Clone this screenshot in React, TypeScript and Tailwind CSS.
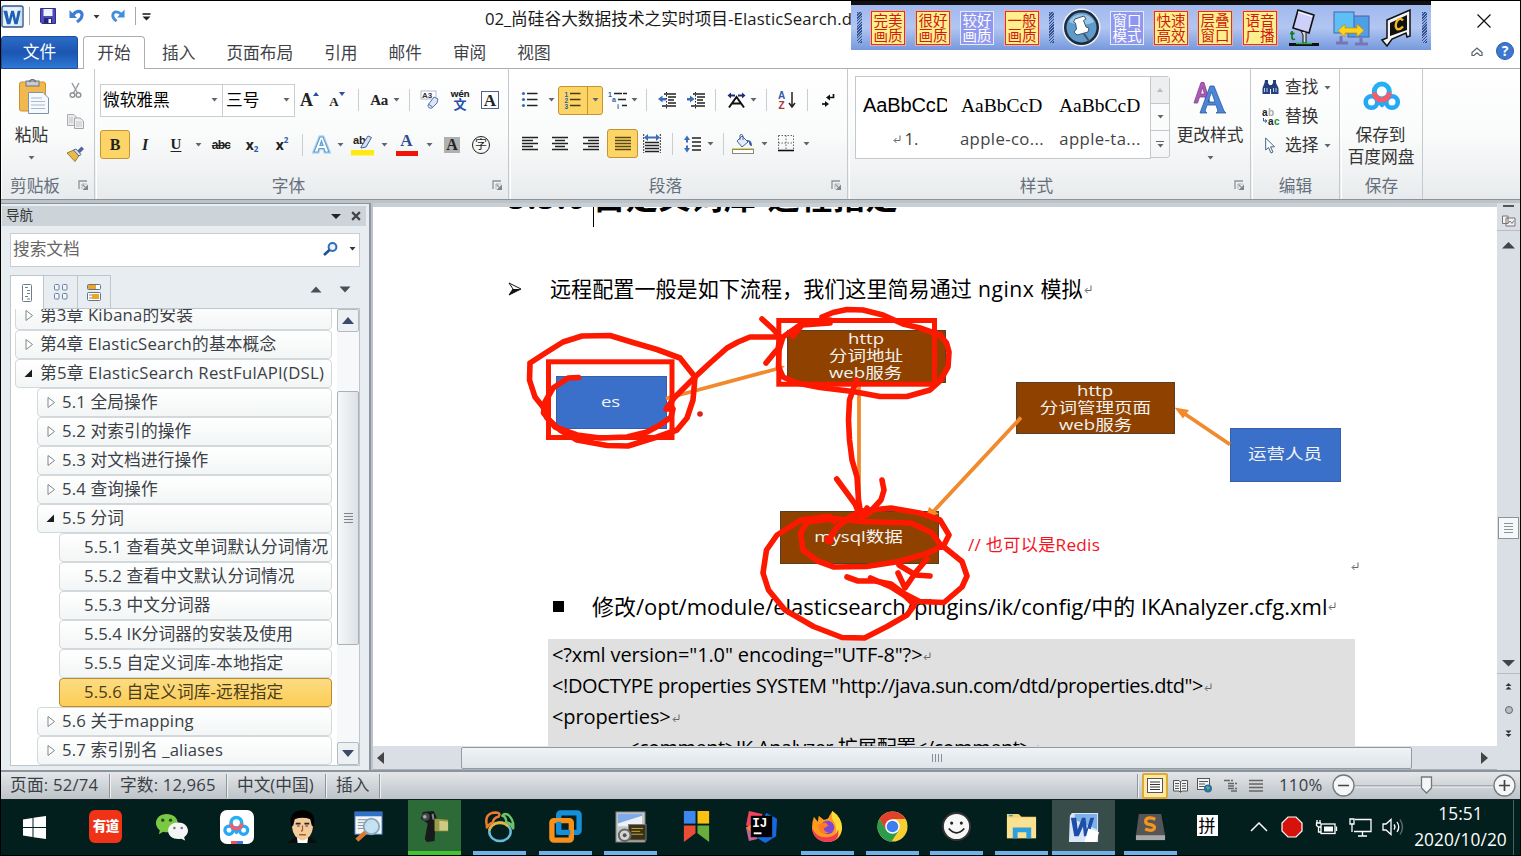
import React from "react";

type Kids = { children?: React.ReactNode };

/* ---------- small shared parts ---------- */

function Slot({ className = "", children }: Kids & { className?: string }) {
  return <div className={"flex h-[30px] shrink-0 items-center justify-center " + className}>{children}</div>;
}

function Caret({ dark = false }: { dark?: boolean }) {
  return (
    <svg className="h-[4px] w-[7px] shrink-0" viewBox="0 0 7 4">
      <path d="M0.5 0H6.5L3.5 3.6Z" fill={dark ? "#333" : "#5d6670"} />
    </svg>
  );
}

function Sep() {
  return <div className="h-[22px] w-px bg-[#c9ced3]" />;
}

function Launcher() {
  return (
    <svg className="h-[11px] w-[11px]" viewBox="0 0 11 11">
      <path d="M1 9V1H9" fill="none" stroke="#8a9299" strokeWidth="1.3" />
      <path d="M4 4L7 7" stroke="#8a9299" strokeWidth="1.2" />
      <path d="M10 4.5V10H4.5Z" fill="#7d858d" />
      <path d="M4 9V4H9" fill="none" stroke="#b3b9be" />
    </svg>
  );
}

function Group({ className, label, launcher, children }: Kids & { className: string; label: string; launcher?: boolean }) {
  return (
    <section className={"relative flex shrink-0 flex-col border-r border-[#c3c9ce] shadow-[inset_1px_0_0_#fff] " + className}>
      <div className="h-[104px]">{children}</div>
      <div className="flex h-[26px] items-center justify-center pt-px text-[16.7px] leading-none text-[#66707c]">{label}</div>
      {launcher && (
        <div className="absolute bottom-[8px] right-[5px]">
          <Launcher />
        </div>
      )}
    </section>
  );
}

function Lines({ rows, color = "#222" }: { rows: [number, number, number][]; color?: string }) {
  return (
    <svg className="h-[18px] w-[18px]" viewBox="0 0 18 18">
      {rows.map(([x1, x2, y], i) => (
        <path key={i} d={`M${x1} ${y}H${x2}`} stroke={color} strokeWidth="1.5" />
      ))}
    </svg>
  );
}

function BaiduDisk({ className }: { className: string }) {
  return (
    <svg className={className} viewBox="0 0 38 30">
      <circle cx="8.5" cy="21" r="5.8" fill="none" stroke="#25a8f5" strokeWidth="4.6" />
      <circle cx="29" cy="21" r="5.8" fill="none" stroke="#25a8f5" strokeWidth="4.6" />
      <path d="M12 16L20 25M26 16L18 25" stroke="#25a8f5" strokeWidth="4.4" />
      <circle cx="18.8" cy="10.5" r="7.5" fill="#fff" stroke="#25b0f0" strokeWidth="5" />
      <path d="M11.3 11.5A7.5 7.5 0 0 0 26.3 11.5" fill="none" stroke="#fb5a67" strokeWidth="5" />
    </svg>
  );
}

function WordLogo({ className }: { className: string }) {
  return (
    <svg className={className} viewBox="0 0 24 24">
      <rect x="1" y="1" width="22" height="22" rx="2" fill="#cfe1f3" stroke="#35598a" strokeWidth="1.4" />
      <rect x="2.5" y="2.5" width="17" height="19" fill="#e9f3fb" />
      <path d="M2.5 6H6.5L8.3 15L10.6 6H13.5L15.6 15L17.4 6H20.5L17.4 20H14L12 11.5L9.7 20H6.2Z" fill="#1f62b4" />
    </svg>
  );
}

/* ---------- title bar and tabs ---------- */

function TitleBar() {
  return (
    <header className="flex h-[35px] shrink-0 items-center bg-white">
      <WordLogo className="mb-[5px] h-[23px] w-[23px]" />
      <div className="mb-[5px] ml-[5px] h-[18px] w-px bg-[#a4a8ac]" />
      <svg className="mb-[5px] ml-[10px] h-[16px] w-[16px]" viewBox="0 0 16 16">
        <path d="M0.5 0.5H15.5V15.5H2L0.5 14Z" fill="#4a4cc0" stroke="#2f2f8c" />
        <rect x="3.5" y="1" width="9" height="7" fill="#eef2ff" />
        <rect x="4" y="10" width="8" height="5.5" fill="#26266e" />
        <rect x="8.5" y="11" width="2.5" height="4" fill="#fff" />
      </svg>
      <svg className="mb-[5px] ml-[13px] h-[16px] w-[16px]" viewBox="0 0 16 16">
        <path d="M4 7C7 2.5 12 2 13 6C13.5 9.5 11 12 8 14" fill="none" stroke="#3f7fd3" strokeWidth="3.2" />
        <path d="M0.5 2V10H8Z" fill="#3f7fd3" />
      </svg>
      <div className="mb-[4px] ml-[8px]"><Caret dark /></div>
      <svg className="mb-[5px] ml-[10px] h-[16px] w-[15px]" viewBox="0 0 16 16">
        <path d="M12 6C8 2.5 4 3 3 6.5C2.5 10 5 12 7 13.5" fill="none" stroke="#3f8fdc" strokeWidth="3" />
        <path d="M15.5 1V9.5H7.5Z" fill="#3f8fdc" />
      </svg>
      <div className="mb-[5px] ml-[10px] h-[18px] w-px bg-[#a4a8ac]" />
      <svg className="mb-[4px] ml-[6px] h-[8px] w-[9px]" viewBox="0 0 9 8">
        <path d="M0.5 1H8.5" stroke="#222" strokeWidth="1.6" />
        <path d="M0.5 3.5H8.5L4.5 7.5Z" fill="#222" />
      </svg>
      <div className="ml-[334px] w-[400px] whitespace-nowrap text-[16.7px] leading-[22px] text-[#1a1a1a]">
        <span className="tracking-[-0.1px]">02_</span>尚硅谷大数据技术之实时项目<span className="tracking-[0.15px]">-ElasticSearch.docx</span>
      </div>
      <svg className="ml-auto mr-[29px] mt-[4px] h-[14px] w-[14px]" viewBox="0 0 14 14">
        <path d="M0.5 0.5L13.5 13.5M13.5 0.5L0.5 13.5" stroke="#111" strokeWidth="1.2" />
      </svg>
    </header>
  );
}

function RibbonTabs() {
  return (
    <nav className="flex h-[33px] shrink-0 items-stretch border-b border-[#a9afb5] bg-white text-[16.7px] leading-none text-[#3e4247]">
      <div className="mb-[-1px] flex w-[77px] items-center justify-center rounded-t-[3px] border border-[#1a4f9f] bg-linear-to-b from-[#2c6cc6] via-[#1c55b2] to-[#2f78d6] text-white">文件</div>
      <div className="mb-[-1px] ml-[5px] flex w-[62px] items-center justify-center rounded-t-[4px] border border-b-0 border-[#a9afb5] bg-white">开始</div>
      {[
        ["插入", "ml-[17px]"],
        ["页面布局", "ml-[31px]"],
        ["引用", "ml-[31px]"],
        ["邮件", "ml-[31px]"],
        ["审阅", "ml-[31px]"],
        ["视图", "ml-[31px]"],
      ].map(([t, m]) => (
        <div key={t} className={"flex items-center whitespace-nowrap pt-[2px] " + m}>{t}</div>
      ))}
      <div className="ml-auto flex items-center gap-[13px] pr-[6px]">
        <svg className="h-[10px] w-[12px]" viewBox="0 0 12 10">
          <path d="M1 8.5V5.5L6 1L11 5.5V8.5H9L6 5.8L3 8.5Z" fill="#fff" stroke="#59626b" strokeWidth="1.2" />
        </svg>
        <div className="mb-[3px] flex h-[18px] w-[18px] items-center justify-center rounded-full border border-[#2d5fae] bg-[#3c78cf] text-[14px] font-bold leading-none text-white">?</div>
      </div>
    </nav>
  );
}

function QualityButton({ a, b, on, className }: { a: string; b: string; on?: boolean; className: string }) {
  return (
    <div
      className={
        "flex h-[34px] w-[34px] shrink-0 flex-col items-center justify-center border pb-px text-[14.5px] leading-[15.5px] " +
        (on ? "border-[#e6e8ff] bg-[#8f98ee] text-white " : "border-[#c8383c] bg-[#fdf08c] text-[#cf1a12] outline outline-[#f2a9a4] ") +
        className
      }
    >
      <span>{a}</span>
      <span>{b}</span>
    </div>
  );
}

function Grip({ className }: { className: string }) {
  return <div className={"h-[31px] w-[5px] shrink-0 bg-[repeating-linear-gradient(135deg,#31508c_0_1px,#8fabe2_1px_2px)] " + className} />;
}

function FloatingToolbar() {
  return (
    <div className="absolute left-[850px] top-0 flex h-[49px] w-[580px] items-center border-t-[4px] border-t-[#111] bg-linear-to-b from-[#a0b8ee] via-[#b2c6f2] to-[#7699dc] font-['Noto_Sans_CJK_SC',sans-serif]">
      <Grip className="ml-[6px]" />
      <QualityButton a="完美" b="画质" className="ml-[9px]" />
      <QualityButton a="很好" b="画质" className="ml-[11px]" />
      <QualityButton a="较好" b="画质" on className="ml-[10px]" />
      <QualityButton a="一般" b="画质" className="ml-[11px]" />
      <Grip className="ml-[10px]" />
      <svg className="ml-[8px] h-[39px] w-[39px] shrink-0" viewBox="0 0 39 39">
        <circle cx="19.5" cy="19.5" r="19" fill="#e8eef4" />
        <circle cx="19.5" cy="19.5" r="17.5" fill="#1c2a3c" />
        <circle cx="19.5" cy="19.5" r="15" fill="#5f9acb" />
        <path d="M7 14A14 14 0 0 1 32 14Q20 20 7 14Z" fill="#9cc6e6" />
        <path d="M20 23L27 33" stroke="#456" strokeWidth="2" />
        <path d="M13 11L22 8L24 11L21.5 12.5L24 19L27 20L26 24L15 27L12 24L14.5 21L13.5 15L11.5 14Z" fill="#fff" stroke="#3c5872" />
      </svg>
      <QualityButton a="窗口" b="模式" on className="ml-[9px]" />
      <QualityButton a="快速" b="高效" className="ml-[10px]" />
      <QualityButton a="层叠" b="窗口" className="ml-[10px]" />
      <QualityButton a="语音" b="广播" className="ml-[11px]" />
      <svg className="ml-[11px] h-[38px] w-[33px] shrink-0" viewBox="0 0 33 38">
        <path d="M10 1L26 6L21 24L5 19Z" fill="#cfd0fa" stroke="#111" strokeWidth="1.6" />
        <path d="M10 3L24 7.5" stroke="#fff" />
        <path d="M13 22L18 23V34H15V26Z" fill="#ddd" stroke="#111" />
        <path d="M1 35.5H31" stroke="#111" strokeWidth="3" />
        <path d="M8 34.5H24" stroke="#25b14b" strokeWidth="1.5" />
        <path d="M4 22V29Q4.5 31 7 30M2 24.5H6.5" stroke="#127a2b" strokeWidth="1.8" fill="none" />
      </svg>
      <svg className="ml-[12px] h-[36px] w-[37px] shrink-0" viewBox="0 0 37 36">
        <rect x="15" y="6" width="21" height="21" fill="#4f9fe6" stroke="#4c5fa8" />
        <rect x="1" y="2" width="20" height="21" fill="#5cc0f5" stroke="#4c5fa8" />
        <path d="M8 26V32M28 28V33M3 33H15M22 34H35" stroke="#7774b8" strokeWidth="3" />
        <path d="M5 20.5L12 14V18H24V14L31 20.5L24 27V23H12V27Z" fill="#ffd21f" stroke="#c99408" strokeWidth="0.8" />
      </svg>
      <svg className="ml-[11px] h-[38px] w-[31px] shrink-0" viewBox="0 0 31 38">
        <path d="M6 11L29 1V27L26 28L25 24L11 30L6 37L1 31L6 29Z" fill="#f4f4f4" stroke="#111" strokeWidth="1.5" />
        <path d="M9 14L26 6V21L9 27Z" fill="#111" />
        <path d="M22 11.5Q19 8 16 12Q13.5 17 16 20Q19 21 22 17.5" stroke="#f5b91f" strokeWidth="2.4" fill="none" />
      </svg>
      <Grip className="ml-[10px]" />
    </div>
  );
}

/* ---------- ribbon ---------- */

function Clipboard() {
  return (
    <div className="flex h-full pt-[10px]">
      <div className="flex w-[61px] flex-col items-center">
        <svg className="ml-[5px] h-[35px] w-[31px]" viewBox="0 0 31 35">
          <rect x="0.5" y="3" width="26" height="29" rx="2" fill="#f2b850" stroke="#d18f2c" />
          <rect x="7" y="2" width="13" height="5" fill="#c9ccd0" stroke="#6f747a" />
          <path d="M10 3Q13.5 -2 17 3" fill="none" stroke="#6f747a" strokeWidth="1.5" />
          <path d="M9.5 13.5H24L29.5 19V34.5H9.5Z" fill="#f6f9fd" stroke="#7e93ad" />
          <path d="M12 19H23M12 22.5H26M12 26H26M12 29.5H26" stroke="#a9b9cf" />
        </svg>
        <span className="mt-[13px] text-[16.7px] leading-none text-[#333]">粘贴</span>
        <span className="mt-[12px] flex"><Caret /></span>
      </div>
      <div className="ml-[4px] flex flex-col items-center">
        <svg className="mt-[3px] h-[17px] w-[13px]" viewBox="0 0 13 17">
          <path d="M3 1L8.5 11M10 1L4.5 11" stroke="#9a9ea3" strokeWidth="1.5" />
          <circle cx="3.5" cy="13" r="2.3" fill="none" stroke="#8f9398" strokeWidth="1.5" />
          <circle cx="9.5" cy="13" r="2.3" fill="none" stroke="#8f9398" strokeWidth="1.5" />
        </svg>
        <svg className="mt-[15px] h-[15px] w-[17px]" viewBox="0 0 17 15">
          <path d="M0.5 0.5H7L9.5 3V11.5H0.5Z" fill="#e8eaec" stroke="#abafb3" />
          <path d="M7.5 4H13L16.5 7V14.5H7.5Z" fill="#eef0f1" stroke="#a3a7ab" />
          <path d="M9 8H15M9 10H15M9 12H15M2 4H6M2 6H6M2 8H6" stroke="#b9bdc0" strokeWidth="0.8" />
        </svg>
        <svg className="mt-[17px] h-[16px] w-[18px]" viewBox="0 0 18 16">
          <path d="M10 6L15.5 0.5L18 3L12.5 8.5Z" fill="#54629f" />
          <path d="M1 7L8 4L13 9.5L9 15.5Z" fill="#e9b94a" stroke="#9a7a2a" />
          <path d="M7.5 4L10 3L15 8.5L13 10Z" fill="#dfe3ee" stroke="#596799" />
        </svg>
      </div>
    </div>
  );
}

function FontGroup() {
  return (
    <div className="pl-[4px] text-[#222]">
      <div className="flex h-[62px] items-center">
        <div className="flex h-[33px] w-[123px] shrink-0 items-center justify-between border border-[#c9cdd2] bg-white pl-[2px] pr-[4px] text-[16.7px] leading-none text-black">
          微软雅黑<Caret />
        </div>
        <div className="-ml-px flex h-[33px] w-[73px] shrink-0 items-center justify-between border border-[#c9cdd2] bg-white pl-[3px] pr-[4px] text-[16.7px] leading-none text-black">
          三号<Caret />
        </div>
        <Slot className="w-[29px] font-['Liberation_Serif',serif] text-[18px] font-bold">A<svg className="mb-[12px] h-[4px] w-[6px]" viewBox="0 0 6 4"><path d="M0 4H6L3 0Z" fill="#2b4ea0" /></svg></Slot>
        <Slot className="w-[26px] font-['Liberation_Serif',serif] text-[13px] font-bold"><span className="mt-[3px]">A</span><svg className="mb-[12px] h-[4px] w-[6px]" viewBox="0 0 6 4"><path d="M0 0H6L3 4Z" fill="#2b4ea0" /></svg></Slot>
        <Slot className="ml-[4px] w-[8px]"><Sep /></Slot>
        <Slot className="ml-[6px] w-[22px] font-['Liberation_Serif',serif] text-[15px] font-bold tracking-[-0.5px]">Aa</Slot>
        <Slot className="w-[12px]"><Caret /></Slot>
        <Slot className="ml-[3px] w-[8px]"><Sep /></Slot>
        <Slot className="ml-[2px] w-[30px]">
          <svg className="h-[20px] w-[20px]" viewBox="0 0 20 20">
            <rect x="1" y="1" width="15" height="8" fill="#fff" stroke="#8d9fc0" strokeWidth="0.7" />
            <text x="2" y="8" fontSize="8" fontWeight="bold" fill="#333" fontFamily="Liberation Sans">A3</text>
            <path d="M8 15L14 7L18 9L17 13L12 18Q8 19 8 15Z" fill="#dbe6f6" stroke="#5474ae" />
            <path d="M8.5 14L12.5 17" stroke="#5474ae" />
          </svg>
        </Slot>
        <Slot className="w-[30px]">
          <div className="flex flex-col items-center leading-none">
            <span className="text-[9.5px] font-bold leading-[7px] tracking-[-0.4px]">wén</span>
            <span className="mt-[2px] text-[13px] font-bold leading-[11px] text-[#2450a8]">文</span>
          </div>
        </Slot>
        <Slot className="w-[30px]">
          <div className="flex h-[18px] w-[18px] items-center justify-center border border-[#4e6488] bg-white font-['Liberation_Serif',serif] text-[17px] font-bold leading-none">A</div>
        </Slot>
      </div>
      <div className="flex h-[27px] items-center">
        <div className="flex h-[29px] w-[30px] shrink-0 items-center justify-center rounded-[3px] border border-[#c49336] bg-[#fcd566] font-['Liberation_Serif',serif] text-[16px] font-bold">B</div>
        <Slot className="w-[30px] font-['Liberation_Serif',serif] text-[16px] font-bold italic">I</Slot>
        <Slot className="w-[32px] font-['Liberation_Serif',serif] text-[15px] font-bold underline underline-offset-2">U</Slot>
        <Slot className="w-[12px]"><Caret /></Slot>
        <Slot className="w-[34px] font-['Liberation_Sans',sans-serif] text-[12px] font-bold tracking-[-0.8px] line-through">abc</Slot>
        <Slot className="w-[28px] text-[14px] font-bold leading-none">x<span className="mt-[8px] text-[8px] text-[#2b5aa8]">2</span></Slot>
        <Slot className="w-[32px] text-[14px] font-bold leading-none">x<span className="mb-[9px] text-[8px] text-[#2b5aa8]">2</span></Slot>
        <Slot className="w-[8px]"><Sep /></Slot>
        <Slot className="w-[30px]">
          <svg className="h-[19px] w-[19px]" viewBox="0 0 19 19">
            <path d="M2 17L8 2H11L17 17H13L12 13.5H7L6 17ZM8 10.5H11L9.5 6Z" fill="#fff" stroke="#b5d6ef" strokeWidth="3.5" />
            <path d="M2 17L8 2H11L17 17H13L12 13.5H7L6 17ZM8 10.5H11L9.5 6Z" fill="#fff" stroke="#5f9fd2" strokeWidth="1.2" />
          </svg>
        </Slot>
        <Slot className="w-[8px]"><Caret /></Slot>
        <Slot className="ml-px w-[35px]">
          <svg className="h-[23px] w-[23px]" viewBox="0 0 23 23">
            <text x="2" y="11" fontSize="11" fontWeight="bold" fill="#222" fontFamily="Liberation Sans">ab</text>
            <path d="M10 14L17 3L20.5 4.5L15 14L10 15Z" fill="#d6e2f4" stroke="#46629b" />
            <rect y="17" width="23" height="5.5" fill="#ffe911" />
          </svg>
        </Slot>
        <Slot className="w-[8px]"><Caret /></Slot>
        <Slot className="w-[37px]">
          <div className="flex flex-col items-center font-['Liberation_Serif',serif] text-[17px] font-bold leading-[15px] text-[#2d4d92]">A<span className="mt-[3px] h-[5px] w-[22px] bg-[#f01408]" /></div>
        </Slot>
        <Slot className="w-[8px]"><Caret /></Slot>
        <Slot className="ml-px w-[36px]">
          <div className="flex h-[16px] w-[16px] items-center justify-center bg-[#b0b0b0] font-['Liberation_Serif',serif] text-[16px] font-bold leading-none">A</div>
        </Slot>
        <Slot className="w-[22px]">
          <div className="flex h-[18px] w-[18px] items-center justify-center rounded-full border-[1.5px] border-[#222] text-[12px] leading-none">字</div>
        </Slot>
      </div>
    </div>
  );
}

const five = [2.5, 5.5, 8.5, 11.5, 14.5];

function ParagraphGroup() {
  return (
    <div className="pl-[10px]">
      <div className="flex h-[62px] items-center">
        <Slot className="w-[20px]">
          <svg className="h-[18px] w-[18px]" viewBox="0 0 18 18">
            {[3, 9, 15].map((y) => (
              <g key={y}><circle cx="2.5" cy={y - 0.5} r="1.6" fill="#3b6dba" /><path d={`M6 ${y - 0.5}H16.5`} stroke="#222" strokeWidth="1.5" /></g>
            ))}
          </svg>
        </Slot>
        <Slot className="ml-[6px] w-[10px]"><Caret /></Slot>
        <div className="ml-[2px] flex h-[29px] w-[45px] shrink-0 items-center rounded-[3px] border border-[#c49336] bg-[#fcd566]">
          <div className="flex h-full w-[29px] items-center justify-center border-r border-[#c49336]">
            <svg className="h-[18px] w-[18px]" viewBox="0 0 18 18">
              {[3, 9, 15].map((y, i) => (
                <g key={y}><text x="0.5" y={y + 2.5} fontSize="6.5" fontWeight="bold" fill="#2c5ca8" fontFamily="Liberation Sans">{i + 1}</text><path d={`M6 ${y - 0.5}H16.5`} stroke="#4a3a10" strokeWidth="1.5" /></g>
              ))}
            </svg>
          </div>
          <div className="flex flex-1 justify-center"><Caret /></div>
        </div>
        <Slot className="ml-[4px] w-[20px]">
          <svg className="h-[18px] w-[19px]" viewBox="0 0 19 18">
            <path d="M6 2.5H19M10 8.5H19M14 14.5H19" stroke="#222" strokeWidth="1.5" strokeDasharray="8 1" />
            <g fontSize="7" fontWeight="bold" fill="#2c5ca8" fontFamily="Liberation Sans"><text x="0" y="5.5">1</text><text x="4" y="11">a</text><text x="9" y="17.5">i</text></g>
          </svg>
        </Slot>
        <Slot className="ml-[2px] w-[10px]"><Caret /></Slot>
        <Slot className="ml-[3px] w-[8px]"><Sep /></Slot>
        <Slot className="ml-[7px] w-[20px]">
          <svg className="h-[17px] w-[18px]" viewBox="0 0 18 17">
            <path d="M6 2H18M10 5H18M10 8H16M10 11H18M4 14H18" stroke="#222" strokeWidth="1.5" /><path d="M8.5 0V17" stroke="#222" strokeDasharray="1.5 1.5" />
            <path d="M0 7L4.5 3.5V6H8V8.5H4.5V10.5Z" fill="#3b6dba" />
          </svg>
        </Slot>
        <Slot className="ml-[9px] w-[20px]">
          <svg className="h-[17px] w-[18px]" viewBox="0 0 18 17">
            <path d="M6 2H18M10 5H18M10 8H16M10 11H18M4 14H18" stroke="#222" strokeWidth="1.5" /><path d="M8.5 0V17" stroke="#222" strokeDasharray="1.5 1.5" />
            <path d="M7.5 7L3 3.5V6H0V8.5H3V10.5Z" fill="#3b6dba" />
          </svg>
        </Slot>
        <Slot className="ml-[5px] w-[8px]"><Sep /></Slot>
        <Slot className="ml-[7px] w-[20px]">
          <svg className="h-[17px] w-[19px]" viewBox="0 0 19 17">
            <path d="M2 15.5L9.5 5L17 15.5M5 11.5H14" stroke="#111" strokeWidth="2" fill="none" />
            <path d="M0.5 3.5L4 0.5V2.5H8V4.5H4V6.5ZM18.5 3.5L15 0.5V2.5H11V4.5H15V6.5Z" fill="#1d2d77" />
          </svg>
        </Slot>
        <Slot className="ml-[2px] w-[10px]"><Caret /></Slot>
        <Slot className="ml-[4px] w-[8px]"><Sep /></Slot>
        <Slot className="ml-[7px] w-[20px]">
          <svg className="h-[18px] w-[18px]" viewBox="0 0 18 18">
            <text x="0" y="8" fontSize="10" fontWeight="bold" fill="#2c5ca8" fontFamily="Liberation Sans">A</text>
            <text x="0.5" y="17.5" fontSize="10" fontWeight="bold" fill="#a33a3a" fontFamily="Liberation Sans">Z</text>
            <path d="M14 1V15M11 12L14 16L17 12" stroke="#222" strokeWidth="1.5" fill="none" />
          </svg>
        </Slot>
        <Slot className="ml-[6px] w-[8px]"><Sep /></Slot>
        <Slot className="ml-[7px] w-[20px]">
          <svg className="h-[15px] w-[13px]" viewBox="0 0 13 15">
            <path d="M11.5 1V4.5H7" stroke="#111" strokeWidth="1.7" fill="none" /><path d="M4 4.5L8 1.5V7.5Z" fill="#111" />
            <path d="M0 11H4" stroke="#111" strokeWidth="1.7" /><path d="M7 11L3 8V14Z" fill="#111" />
          </svg>
        </Slot>
      </div>
      <div className="flex h-[25px] items-center">
        <Slot className="w-[20px]"><Lines rows={five.map((y, i) => [1, i % 2 ? 12 : 17, y] as [number, number, number])} /></Slot>
        <Slot className="ml-[10px] w-[20px]"><Lines rows={five.map((y, i) => (i % 2 ? [4, 14, y] : [1, 17, y]) as [number, number, number])} /></Slot>
        <Slot className="ml-[11px] w-[20px]"><Lines rows={five.map((y, i) => [i % 2 ? 6 : 1, 17, y] as [number, number, number])} /></Slot>
        <div className="ml-[6px] flex h-[29px] w-[31px] shrink-0 items-center justify-center rounded-[3px] border border-[#c49336] bg-[#fcd566]">
          <Lines color="#5a4818" rows={five.map((y) => [1, 17, y] as [number, number, number])} />
        </div>
        <Slot className="ml-[4px] w-[20px]">
          <svg className="h-[19px] w-[18px]" viewBox="0 0 18 19">
            <path d="M0.7 0V19M17.3 0V19" stroke="#333" strokeDasharray="2 1" /><path d="M2 8.5H16M2 11.5H16M2 14.5H16M2 17.5H16" stroke="#222" strokeWidth="1.4" />
            <path d="M1 3.5L5 0V2.5H13V0L17 3.5L13 7V4.5H5V7Z" fill="#3b6dba" />
          </svg>
        </Slot>
        <Slot className="ml-[6px] w-[8px]"><Sep /></Slot>
        <Slot className="ml-[7px] w-[20px]">
          <svg className="h-[18px] w-[18px]" viewBox="0 0 18 18">
            <path d="M3 0.5L6 5H4V7.5H2V5H0ZM3 17.5L6 13H4V10.5H2V13H0Z" fill="#3b6dba" /><path d="M8 3H17M8 7H17M8 11H17M8 15H17" stroke="#222" strokeWidth="1.6" />
          </svg>
        </Slot>
        <Slot className="ml-[2px] w-[10px]"><Caret /></Slot>
        <Slot className="ml-[4px] w-[8px]"><Sep /></Slot>
        <Slot className="ml-[5px] w-[22px]">
          <svg className="h-[20px] w-[22px]" viewBox="0 0 22 20">
            <path d="M5 7L10 2L16 8L10 13Z" fill="#e5ecf6" stroke="#46629b" /><path d="M8 6V1Q10 -1 11 2V6" fill="none" stroke="#46629b" /><path d="M14 6Q20 5 20 12Q17 12 17 8Z" fill="#2b5aa8" />
            <rect x="0.5" y="15.5" width="21" height="4" fill="#fff" stroke="#888" /><path d="M0 14.5H22" stroke="#e6d33a" />
          </svg>
        </Slot>
        <Slot className="ml-[5px] w-[10px]"><Caret /></Slot>
        <Slot className="ml-[7px] w-[20px]">
          <svg className="h-[17px] w-[16px]" viewBox="0 0 16 17">
            <path d="M0.5 0.5H15.5M0.5 0.5V15M15.5 0.5V15M8 0.5V15M0.5 8H15.5" stroke="#666" strokeDasharray="1.5 1.5" fill="none" /><path d="M0 15.5H16" stroke="#111" strokeWidth="1.6" />
          </svg>
        </Slot>
        <Slot className="ml-[5px] w-[10px]"><Caret /></Slot>
      </div>
    </div>
  );
}

function StylesGroup() {
  return (
    <div className="flex pl-[6px] pt-[7px]">
      <div className="flex h-[83px] w-[296px] shrink-0 border border-[#c3c8cd] bg-white">
        <div className="flex w-[98px] flex-col items-center">
          <div className="mt-[15px] h-[26px] w-[84px] overflow-hidden whitespace-nowrap font-['Liberation_Sans',sans-serif] text-[20px] leading-[27px] tracking-[-0.1px] text-black">AaBbCcD</div>
          <div className="mt-[9px] flex items-center gap-[4px] text-[16.7px] leading-[24px] text-[#444]"><Pilcrow />1.</div>
        </div>
        {["apple-co...", "apple-ta..."].map((t) => (
          <div key={t} className="flex w-[98px] flex-col items-center">
            <div className="mt-[15px] h-[26px] w-[84px] overflow-hidden whitespace-nowrap font-['Liberation_Serif',serif] text-[19.5px] leading-[27px] text-black">AaBbCcD</div>
            <div className="-ml-[2px] mt-[9px] text-[16.7px] leading-[24px] tracking-[0.4px] text-[#444]">{t}</div>
          </div>
        ))}
      </div>
      <div className="-ml-px flex h-[82px] w-[20px] shrink-0 flex-col rounded-r-[3px] border border-[#c3c8cd]">
        <div className="flex flex-1 items-center justify-center bg-[#eceef0]"><svg className="h-[4px] w-[6px]" viewBox="0 0 6 4"><path d="M0 4H6L3 0Z" fill="#b6bbc0" /></svg></div>
        <div className="flex flex-1 items-center justify-center border-y border-[#c3c8cd]"><Caret /></div>
        <div className="flex flex-1 flex-col items-center justify-center gap-[2px]"><span className="h-px w-[8px] bg-[#5d6670]" /><Caret /></div>
      </div>
      <div className="flex flex-1 flex-col items-center">
        <svg className="mt-[6px] h-[32px] w-[34px]" viewBox="0 0 34 32">
          <path d="M1 21L8 0.5H11L17 21H13.5L12 15H6.5L4.5 21ZM7.5 12H11.5L9.5 5.5Z" fill="#b05ab8" stroke="#7d3c88" strokeWidth="0.8" />
          <path d="M7 31L17 4H21L31 29L33 31H23L25 29L23 23H14L12 29L14 31ZM15 20H22L18.5 10Z" fill="#4d86d6" stroke="#2a5aa5" strokeWidth="0.8" />
        </svg>
        <span className="mt-[13px] text-[16.7px] leading-none text-[#333]">更改样式</span>
        <span className="mt-[12px] flex"><Caret /></span>
      </div>
    </div>
  );
}

function EditGroup() {
  return (
    <div className="flex flex-col pl-[10px] pt-[4px] text-[16.7px] leading-none text-[#333]">
      <div className="flex h-[29px] items-center">
        <svg className="mr-[6px] h-[15px] w-[17px]" viewBox="0 0 17 15">
          <path d="M3 0H6V3L8 6V14H0.5V8L2.5 3ZM11 0H14V3L16.5 8V14H9V6L11 3Z" fill="#23407c" /><path d="M7 5H10V9H7Z" fill="#23407c" /><path d="M2.5 8V12M5 8V12M11.5 8V12M14 8V12" stroke="#b9cdee" />
        </svg>
        查找<span className="ml-[6px]"><Caret /></span>
      </div>
      <div className="flex h-[29px] items-center">
        <svg className="mr-[6px] h-[18px] w-[18px]" viewBox="0 0 18 18">
          <g fontFamily="Liberation Sans" fontWeight="bold" fontSize="10"><text x="0" y="8" fill="#222">a</text><text x="6" y="8" fill="#aaa">b</text><text x="6" y="17" fill="#222">a</text><text x="12" y="17" fill="#1e8a2e">c</text></g>
          <path d="M1.5 10V13H4.5M3 11.5L5 13L3 14.5" stroke="#2b5aa8" fill="none" />
        </svg>
        <span className="-ml-px">替换</span>
      </div>
      <div className="flex h-[29px] items-center">
        <svg className="ml-[3px] mr-[9px] h-[17px] w-[11px]" viewBox="0 0 11 17">
          <path d="M0.7 1V13L3.5 10.5L6 16L8 15L5.5 9.8H9.5Z" fill="#fff" stroke="#4a6286" />
        </svg>
        选择<span className="ml-[6px]"><Caret /></span>
      </div>
    </div>
  );
}

function Ribbon() {
  return (
    <div className="flex h-[131px] shrink-0 border-b border-[#8b9298] bg-linear-to-b from-white via-[#fafbfb] to-[#e8ebed]">
      <Group className="w-[94px] [&>div:nth-child(2)]:pr-[25px]" label="剪贴板" launcher><Clipboard /></Group>
      <Group className="ml-px w-[413px] [&>div:nth-child(2)]:pr-[27px]" label="字体" launcher><FontGroup /></Group>
      <Group className="ml-px w-[338px] [&>div:nth-child(2)]:pr-[26px]" label="段落" launcher><ParagraphGroup /></Group>
      <Group className="ml-px w-[402px] [&>div:nth-child(2)]:pr-[26px]" label="样式" launcher><StylesGroup /></Group>
      <Group className="ml-px w-[88px]" label="编辑"><EditGroup /></Group>
      <Group className="ml-px w-[82px]" label="保存">
        <div className="flex flex-col items-center pt-[12px] text-[16.7px] leading-[22px] text-[#333]">
          <BaiduDisk className="mb-[13px] h-[30px] w-[38px]" />
          <span className="-ml-[4px] -mr-[2px]">保存到</span>
          <span className="-ml-px">百度网盘</span>
        </div>
      </Group>
    </div>
  );
}

/* ---------- navigation pane ---------- */

type Item = [string, number, "open" | "closed" | "leaf", boolean?];
const items: Item[] = [
  ["第3章 Kibana的安装", 1, "closed"],
  ["第4章 ElasticSearch的基本概念", 1, "closed"],
  ["第5章 ElasticSearch RestFulAPI(DSL)", 1, "open"],
  ["5.1 全局操作", 2, "closed"],
  ["5.2 对索引的操作", 2, "closed"],
  ["5.3 对文档进行操作", 2, "closed"],
  ["5.4 查询操作", 2, "closed"],
  ["5.5 分词", 2, "open"],
  ["5.5.1 查看英文单词默认分词情况", 3, "leaf"],
  ["5.5.2 查看中文默认分词情况", 3, "leaf"],
  ["5.5.3 中文分词器", 3, "leaf"],
  ["5.5.4 IK分词器的安装及使用", 3, "leaf"],
  ["5.5.5 自定义词库-本地指定", 3, "leaf"],
  ["5.5.6 自定义词库-远程指定", 3, "leaf", true],
  ["5.6 关于mapping", 2, "closed"],
  ["5.7 索引别名 _aliases", 2, "closed"],
];
const indents = ["", "ml-[4px] tracking-[0.18px]", "ml-[26px] tracking-[0.15px]", "ml-[48px] tracking-[0.13px]"];

function NavRow({ item: [text, level, kind, active] }: { item: Item }) {
  return (
    <div
      className={
        "flex h-[29px] shrink-0 items-center rounded-[4px] border text-[16.7px] leading-none whitespace-nowrap " +
        indents[level] +
        (active ? " border-[#b98a2e] bg-linear-to-b from-[#fbdc82] to-[#fdcd55] text-[#4a3d1a]" : " border-[#d3d8da] bg-linear-to-b from-white to-[#f3f6f6] text-[#3b4046]")
      }
    >
      {kind === "closed" && <svg className="ml-[9px] mr-[6px] h-[13px] w-[9px] shrink-0" viewBox="0 0 9 13"><path d="M1 1.5L7.5 6.5L1 11.5Z" fill="#fff" stroke="#80868c" /></svg>}
      {kind === "open" && <svg className="ml-[8px] mr-[7px] h-[9px] w-[9px] shrink-0" viewBox="0 0 9 9"><path d="M8 0.5V8H0.5Z" fill="#1c1c1c" /></svg>}
      {kind === "leaf" && <span className="w-[24px] shrink-0" />}
      <span className={text.endsWith("(DSL)") ? "tracking-[0.28px]" : ""}>{text}</span>
    </div>
  );
}

function NavPane() {
  return (
    <aside className="flex w-[370px] shrink-0 flex-col border-r-2 border-t border-[#8e969d] bg-[#e7edf0]">
      <div className="ml-px mr-[3px] mt-[2px] flex h-[20px] shrink-0 items-center bg-[#ccd3d9] pl-[4px] pr-[5px] text-[13.5px] leading-none text-[#333]">
        导航
        <svg className="ml-auto h-[5px] w-[10px]" viewBox="0 0 10 5"><path d="M0 0H10L5 5Z" fill="#222" /></svg>
        <svg className="ml-[10px] h-[10px] w-[10px]" viewBox="0 0 9 9"><path d="M1 1L8 8M8 1L1 8" stroke="#444" strokeWidth="2" /></svg>
      </div>
      <div className="ml-[9px] mt-[7px] flex h-[34px] w-[350px] shrink-0 items-center border border-[#c8ced3] bg-white pb-[2px] pl-[2px] text-[16.7px] leading-none text-[#666]">
        搜索文档
        <svg className="ml-auto h-[14px] w-[15px]" viewBox="0 0 15 14"><circle cx="9.5" cy="5" r="3.9" fill="#eaf3fc" stroke="#2e6db8" strokeWidth="2" /><path d="M6.5 8L1 13" stroke="#1f4f92" strokeWidth="2.6" /></svg>
        <span className="ml-[11px] mr-[3px]"><Caret dark /></span>
      </div>
      <div className="mt-[8px] flex h-[33px] shrink-0 items-end pl-[9px]">
        <div className="z-10 mb-[-1px] flex h-[34px] w-[34px] items-center justify-center border border-b-0 border-[#bfc6cb] bg-white">
          <svg className="h-[18px] w-[10px]" viewBox="0 0 10 18"><rect x="0.5" y="0.5" width="9" height="17" rx="1" fill="#fff" stroke="#6d7f92" /><path d="M3 3.5H6M5 6.5H8M5 9.5H8M3 12.5H6M5 15H8" stroke="#6b8577" /></svg>
        </div>
        <div className="-ml-px flex h-[33px] w-[35px] items-center justify-center border border-b-0 border-[#bfc6cb]">
          <svg className="h-[16px] w-[14px]" viewBox="0 0 14 16"><g fill="#f4f7fa" stroke="#6681a5"><rect x="0.5" y="0.5" width="4.5" height="5.5" rx="1" /><rect x="8.5" y="0.5" width="4.5" height="5.5" rx="1" /><rect x="0.5" y="9.5" width="4.5" height="5.5" rx="1" /><rect x="8.5" y="9.5" width="4.5" height="5.5" rx="1" /></g></svg>
        </div>
        <div className="-ml-px flex h-[33px] w-[34px] items-center justify-center border border-b-0 border-[#bfc6cb]">
          <svg className="h-[17px] w-[15px]" viewBox="0 0 15 17"><rect x="0.5" y="0.5" width="13" height="5" rx="1" fill="#fff" stroke="#5e7593" /><rect x="1" y="1" width="8" height="4" fill="#f0a521" /><rect x="0.5" y="8.5" width="13" height="8" rx="1" fill="#fff" stroke="#5e7593" /><path d="M2 11H6M2 14H6" stroke="#889" /><rect x="5" y="10" width="7" height="5" fill="#f0a521" /></svg>
        </div>
        <svg className="mb-[15px] ml-auto h-[7px] w-[12px]" viewBox="0 0 12 7"><path d="M0.5 6.5H11.5L6 0.5Z" fill="#4b5056" /></svg>
        <svg className="mb-[15px] ml-[17px] mr-[18px] h-[7px] w-[12px]" viewBox="0 0 12 7"><path d="M0.5 0.5H11.5L6 6.5Z" fill="#4b5056" /></svg>
      </div>
      <div className="ml-[9px] flex h-[458px] w-[350px] shrink-0 border border-[#bfc6cb] bg-white">
        <div className="flex h-full w-[321px] flex-col overflow-hidden">
          <div className="-mt-[8px] flex flex-col">{items.map((it) => <NavRow key={it[0]} item={it} />)}</div>
        </div>
        <div className="ml-[5px] flex w-[22px] flex-col bg-[#f7f8f9]">
          <div className="flex h-[23px] items-center justify-center rounded-[2px] border border-[#b4bcc3] bg-[#eef1f4]"><svg className="h-[7px] w-[12px]" viewBox="0 0 12 7"><path d="M0 7H12L6 0Z" fill="#3b4a6b" /></svg></div>
          <div className="mt-[59px] flex h-[254px] items-center justify-center rounded-[2px] border border-[#a9b1b8] bg-linear-to-r from-[#f6f7f8] to-[#dde1e5]">
            <div className="flex flex-col gap-[2px]">{[0, 1, 2, 3].map((i) => <span key={i} className="h-px w-[9px] bg-[#7e858c]" />)}</div>
          </div>
          <div className="mt-auto flex h-[23px] items-center justify-center rounded-[2px] border border-[#b4bcc3] bg-[#eef1f4]"><svg className="h-[7px] w-[12px]" viewBox="0 0 12 7"><path d="M0 0H12L6 7Z" fill="#3b4a6b" /></svg></div>
        </div>
      </div>
    </aside>
  );
}

/* ---------- document ---------- */

function Pilcrow() {
  return (
    <svg className="inline-block h-[9px] w-[9px]" viewBox="0 0 9 9"><path d="M8 0.5V5.5H2.5M4.5 3L2 5.5L4.5 8" fill="none" stroke="#666" /></svg>
  );
}

function DiagramNode({ className, lines }: { className: string; lines: string[] }) {
  return (
    <div className={"absolute flex flex-col items-center justify-center border pb-[2px] text-[14.5px] leading-[17px] text-[#f3f3f3] " + className}>
      {lines.map((l) => <span key={l} className="scale-x-[1.28] whitespace-nowrap">{l}</span>)}
    </div>
  );
}

const strokes = [
  "530,363 547,352 563,342 582,336 610,335.5 633,342.5 657,349.5 680,358 695,377 693,400 687,418 677,430 657,437 628,446 607,445.5 577,440 560,430 547,418 543,407 535,397 529.5,380 530,363",
  "578.5,377.5 568,378 553,388 545,402 543.5,413 555,427 577,435 600,438 627,437 647,432 660,425 671,417 673,409 666,409 674,398 695,377 710,363 727,348 738,342 750,337 780,337",
  "762,319 773,329 780,337 778,349 775,352 766,363",
  "793,336 802,325 830,323 822,317 833,312.5 847,309.5 863,310 883,315 903,324 920,328 940,335 946.5,343 949,352 948,367 940,381 930,390 907,396.5 880,396.5 853,391.5 820,387.5 797,383 783,377 778.5,367 779,350 783,337 800,325 830,320",
  "856.5,380 849.5,400 848.5,420 849.5,440 852,460 857,477 858.5,500 861.5,518",
  "836.7,479 847,493 858,508 861.5,517 868,514 881,500 884,490 882,480",
  "829,540 836,528 850,517 862,511 891,508 919.5,513 940,520 949,535 944,545 928,553 899,561.5 866.5,566.5 834,567 817.5,561 803,550 800.5,533 807,522 834,518.5 862,521.5 911,523 932,533 942,547",
  "830,516.5 801,520 777,535 766.5,550 763,573 768.5,590 785,610 813.5,626.5 842,637.5 864.5,638 887,626.5 907,615 914.5,605 905,596 891,587 870.5,578",
  "847,577 858,581 875,581 891,584 903,593 919.5,601.5 944,602.5 962,587 967,576 962,561.5 944,547",
  "898,573 905,588 916,572 927,559",
  "899,565 915.5,575 930,576",
  "856,506 861,520 867,508",
  "808,521 822,517 834,521",
];

function DocumentView() {
  return (
    <main className="relative h-[539px] overflow-hidden bg-white text-black">
      <div className="-mt-[30px] flex h-[40px] items-center whitespace-nowrap pl-[135px] text-[32px] font-bold leading-none">
        <span className="w-[85px] tracking-[1px]">5.5.6</span><span className="tracking-[0.7px]">自定义词库-远程指定</span><Pilcrow />
      </div>
      <div className="absolute left-[220px] top-0 h-[20px] w-px bg-black" />
      <div className="mt-[52px] flex h-[40px] items-center whitespace-nowrap pl-[135px] text-[21.1px] leading-none">
        <svg className="mr-[28px] h-[14px] w-[14px]" viewBox="0 0 14 14"><path d="M1 1L13 7L1 13L5 7Z" fill="#fff" stroke="#111" /><path d="M5 7H13L1 13Z" fill="#111" /></svg>
        <span>远程配置一般是如下流程，我们这里简易通过<span className="tracking-[0.55px]"> nginx </span>模拟</span><Pilcrow />
      </div>
      <div className="mt-[277px] flex h-[40px] items-center whitespace-nowrap pl-[180px] text-[22px] leading-none">
        <span className="mr-[28px] h-[11px] w-[11px] bg-black" />
        <span>修改/opt/module/elasticsearch/plugins/ik/config/中的 IKAnalyzer.cfg.xml</span><Pilcrow />
      </div>
      <div className="ml-[175px] mt-[13px] h-[125px] w-[807px] whitespace-nowrap bg-[#e0e0e0] pl-[4px] text-[20px] leading-[31px]">
        <div className="tracking-[-0.12px]">{'<?xml version="1.0" encoding="UTF-8"?>'}<Pilcrow /></div>
        <div className="tracking-[-0.4px]">{'<!DOCTYPE properties SYSTEM "http://java.sun.com/dtd/properties.dtd">'}<Pilcrow /></div>
        <div className="tracking-[-0.1px]">{"<properties>"}<Pilcrow /></div>
        <div className="pl-[76px] tracking-[-0.5px]">{"<comment>IK Analyzer 扩展配置</comment>"}<Pilcrow /></div>
      </div>

      <DiagramNode className="left-[182.5px] top-[168.5px] h-[53px] w-[111px] border-[#3560a8] bg-[#3b70ca]" lines={["es"]} />
      <DiagramNode className="left-[413.5px] top-[123px] h-[53px] w-[159px] border-[#54402a] bg-[#8f4200]" lines={["http", "分词地址", "web服务"]} />
      <DiagramNode className="left-[643px] top-[175px] h-[52px] w-[159px] border-[#54402a] bg-[#8f4200]" lines={["http", "分词管理页面", "web服务"]} />
      <DiagramNode className="left-[856.5px] top-[220.5px] h-[54px] w-[111px] border-[#3560a8] bg-[#3b70ca]" lines={["运营人员"]} />
      <DiagramNode className="left-[406.5px] top-[303.5px] h-[53px] w-[159px] border-[#54402a] bg-[#8f4200]" lines={["mysql数据"]} />
      <div className="absolute left-[595px] top-[326px] whitespace-nowrap text-[17.2px] leading-[24px] tracking-[0.25px] text-[#f5141e]">// 也可以是Redis</div>
      <div className="absolute left-[977px] top-[346px]"><Pilcrow /></div>

      <svg className="absolute left-0 top-0 h-[539px] w-[1124px]" viewBox="373 207 1124 539">
        <g stroke="#f18a2d" strokeWidth="3.8" fill="none">
          <path d="M666 398.5L782 367.5M859 386V506M1021 417.5L931 514M1230 444.5L1182 412" />
        </g>
        <g fill="#f58a28">
          <path d="M1174.5 407.5L1189 410L1183 418.5Z" />
          <path d="M926 517L929 507L939 514Z" />
          <path d="M785 366.5L777 364V372Z" />
        </g>
        <g stroke="#fd1800" strokeWidth="5.6" fill="none" strokeLinecap="round" strokeLinejoin="round">
          {strokes.map((p) => <polyline key={p} points={p} />)}
        </g>
        <g stroke="#fd1800" strokeWidth="5" fill="none">
          <rect x="548.5" y="361.8" width="123.5" height="75.7" />
          <rect x="778.8" y="320.5" width="155.7" height="63.7" />
        </g>
        <circle cx="829" cy="540" r="4.5" fill="#fd1800" />
        <circle cx="700" cy="414" r="2.8" fill="#e02018" />
      </svg>
    </main>
  );
}

function VerticalBar() {
  return (
    <div className="flex w-[23px] shrink-0 flex-col items-center bg-[#d9dfe5]">
      <div className="mt-[2px] h-[2px] w-[11px] shrink-0 bg-[#555]" />
      <svg className="mt-[7px] h-[13px] w-[14px]" viewBox="0 0 14 12"><path d="M0.5 1.5H6V9H0.5ZM4 3.5H13V11.5H4Z" fill="#f3f3f3" stroke="#7b7377" /><path d="M6 9L8 6.5L10 9L12 6" stroke="#7b7377" fill="none" /></svg>
      <div className="mt-[3px] h-px w-full bg-[#b5bcc4]" />
      <svg className="mt-[11px] h-[7px] w-[13px]" viewBox="0 0 13 7"><path d="M0 6.5H13L6.5 0Z" fill="#444" /></svg>
      <div className="mr-px mt-[268px] flex h-[22px] w-[21px] flex-col items-center justify-center gap-[2px] border border-[#8b939b] bg-[#f7f8f9]">
        {[0, 1, 2, 3].map((i) => <span key={i} className="h-px w-[9px] bg-[#8b939b]" />)}
      </div>
      <svg className="mt-[121px] h-[7px] w-[13px]" viewBox="0 0 13 7"><path d="M0 0H13L6.5 6.5Z" fill="#444" /></svg>
      <div className="mt-[6px] h-px w-full bg-[#b5bcc4]" />
      <svg className="mt-[9px] h-[7px] w-[7px]" viewBox="0 0 7 7"><path d="M0.5 3H6.5L3.5 0ZM0.5 6.5H6.5L3.5 3.5Z" fill="#333" /></svg>
      <div className="mt-[16px] h-[8px] w-[8px] rounded-full border border-[#666] bg-[#b8bcc0]" />
      <svg className="mt-[16px] h-[7px] w-[7px]" viewBox="0 0 7 7"><path d="M0.5 0.5H6.5L3.5 3.5ZM0.5 4H6.5L3.5 7Z" fill="#333" /></svg>
    </div>
  );
}

function HorizontalBar() {
  return (
    <div className="flex h-[24px] shrink-0 items-center border-b border-[#a8b0b7] bg-[#d9dfe5]">
      <svg className="ml-[4px] h-[12px] w-[7px]" viewBox="0 0 7 12"><path d="M7 0V12L0 6Z" fill="#444" /></svg>
      <div className="ml-[77px] flex h-[22px] w-[951px] items-center justify-center gap-[2px] rounded-[2px] border border-[#939ba3] bg-linear-to-b from-[#eff3f6] to-[#dfe4e9]">
        {[0, 1, 2, 3].map((i) => <span key={i} className="h-[8px] w-px bg-[#868d95]" />)}
      </div>
      <svg className="ml-auto mr-[9px] h-[12px] w-[7px]" viewBox="0 0 7 12"><path d="M0 0V12L7 6Z" fill="#444" /></svg>
    </div>
  );
}

/* ---------- status bar ---------- */

function StatusSep({ className }: { className: string }) {
  return <div className={"h-[24px] w-[2px] border-l border-[#8e959b] bg-[#eef1f3] " + className} />;
}

function StatusBar() {
  return (
    <footer className="flex h-[29px] shrink-0 items-center whitespace-nowrap border-t-2 border-[#8d949b] bg-linear-to-b from-[#e3e7ea] via-[#cfd4d8] to-[#bdc3c8] text-[16.7px] leading-none text-[#3a3f45]">
      <span className="ml-[9px] w-[99px] tracking-[0.2px]">页面: 52/74</span>
      <StatusSep className="" />
      <span className="ml-[9px] w-[97px] tracking-[0.15px]">字数: 12,965</span>
      <StatusSep className="ml-[9px]" />
      <span className="ml-[9px] w-[79px]">中文(中国)</span>
      <StatusSep className="ml-[9px]" />
      <span className="ml-[9px]">插入</span>
      <StatusSep className="ml-[10px]" />
      <StatusSep className="ml-auto" />
      <div className="ml-[3px] flex h-[26px] w-[26px] items-center justify-center rounded-[2px] border-2 border-[#dfa936] bg-[#fde9a2]">
        <svg className="h-[15px] w-[16px]" viewBox="0 0 16 15"><rect x="0.5" y="0.5" width="15" height="14" fill="#fff" stroke="#555" /><path d="M3 4H13M3 6.5H13M3 9H13M3 11.5H13" stroke="#333" /></svg>
      </div>
      <svg className="ml-[5px] h-[14px] w-[15px]" viewBox="0 0 15 14"><path d="M0.5 1.5H6L7.5 3L9 1.5H14.5V12H9L7.5 13.5L6 12H0.5ZM7.5 3V13" fill="#f4f4f4" stroke="#555" /><path d="M2 4.5H6M2 7H6M2 9.5H6M9 4.5H13M9 7H13M9 9.5H13" stroke="#555" /></svg>
      <svg className="ml-[9px] h-[15px] w-[16px]" viewBox="0 0 16 15"><rect x="0.5" y="0.5" width="12" height="11" fill="#f4f4f4" stroke="#555" /><path d="M2 3.5H11M2 6H8M2 8.5H8" stroke="#555" /><circle cx="11" cy="10.5" r="4" fill="#2f6fa8" /><path d="M9 9Q11 7 13 10Q11 13 10 11Z" fill="#64b36a" /></svg>
      <svg className="ml-[11px] h-[13px] w-[13px]" viewBox="0 0 13 13"><path d="M0 1.5H9M4 4.5H13M4 7H11M4 9.5H13M7 12H13" stroke="#666" strokeWidth="1.3" strokeDasharray="6 1" /></svg>
      <svg className="ml-[12px] h-[13px] w-[14px]" viewBox="0 0 14 13"><path d="M0 1.5H14M0 5H14M0 8.5H14M0 12H14" stroke="#666" strokeWidth="1.3" /></svg>
      <span className="ml-[16px] w-[45px] tracking-[0.3px]">110%</span>
      <svg className="ml-[8px] mr-[3px] h-[24px] w-[185px]" viewBox="0 0 185 24">
        <path d="M22 12H163" stroke="#7c848b" /><path d="M22 13H163" stroke="#f2f4f5" />
        <g fill="#f5f6f7" stroke="#70787f" strokeWidth="1.3"><circle cx="11.5" cy="11.5" r="10.5" /><circle cx="172.5" cy="11.5" r="10.5" /><path d="M89.5 3H99.5V14L94.5 19L89.5 14Z" /></g>
        <path d="M6 11.5H17M167 11.5H178M172.5 6V17" stroke="#444" strokeWidth="1.7" />
      </svg>
    </footer>
  );
}

/* ---------- taskbar ---------- */

function Task({ className, tone, running, children }: Kids & { className: string; tone?: "green" | "grey"; running?: boolean }) {
  return (
    <div className={"flex h-full shrink-0 justify-center " + className}>
      <div className={"flex h-full flex-col " + (tone === "green" ? "w-[53px] bg-[#2c6a38]" : tone === "grey" ? "w-[63px] bg-[#384c4a]" : "w-[53px]")}>
        <div className="flex flex-1 items-center justify-center pt-[2px]">{children}</div>
        <div className={"h-[4px] " + (tone === "green" ? "bg-[#42c52e]" : running ? "bg-[#72b0e8]" : "")} />
      </div>
    </div>
  );
}

const ic = "h-[33px] w-[33px]";

function Taskbar() {
  return (
    <div className="flex h-[57px] shrink-0 items-stretch border-b border-t border-b-black border-t-[#10221f] bg-[#031f1d] text-white">
      <div className="flex w-[66px] items-center justify-center">
        <svg className="h-[23px] w-[23px]" viewBox="0 0 23 23"><path d="M0 3.5L9.5 2V11H0ZM10.5 1.8L23 0V11H10.5ZM0 12H9.5V21L0 19.5ZM10.5 12H23V23L10.5 21.2Z" fill="#fff" /></svg>
      </div>
      <Task className="ml-[6px] w-[65.6px]">
        <div className="flex h-[33px] w-[33px] items-center justify-center rounded-[6px] bg-[#f03216] text-[13.5px] font-black leading-none tracking-[-0.5px]">有道</div>
      </Task>
      <Task className="w-[65.6px]">
        <svg className={ic} viewBox="0 0 34 34">
          <path d="M12 4C5.5 4 1 8 1 13.5C1 16.5 2.5 19 5 21L4 25L8.5 22.5C10 23 11 23 12 23C19 23 23.5 19 23.5 13.5S18.5 4 12 4Z" fill="#7bc943" />
          <path d="M24 13C18 13 13.5 16.5 13.5 21.5S18 30 24 30C25 30 26 29.8 27 29.5L31 31.5L30 28C32.5 26.5 34 24 34 21.5C34 16.5 29.5 13 24 13Z" fill="#f4f5f4" />
          <g fill="#1f4d1b"><circle cx="8" cy="10.5" r="1.7" /><circle cx="16" cy="10.5" r="1.7" /></g><g fill="#777"><circle cx="20" cy="18.5" r="1.3" /><circle cx="27.5" cy="18.5" r="1.3" /></g>
        </svg>
      </Task>
      <Task className="w-[65.6px]">
        <div className="flex h-[34px] w-[34px] flex-col items-center overflow-hidden rounded-[7px] bg-white">
          <BaiduDisk className="mt-[5px] h-[22px] w-[27px]" />
          <div className="mt-auto flex h-[3px] w-[12px]"><span className="w-1/2 bg-[#f05064]" /><span className="w-1/2 bg-[#3a7be0]" /></div>
        </div>
      </Task>
      <Task className="w-[65.6px]">
        <svg className={ic} viewBox="0 0 34 34">
          <path d="M2 34Q4 30 12 28H22Q30 30 32 34Z" fill="#0b0b0b" /><path d="M11 26H23L22 34H12Z" fill="#fff" />
          <path d="M6.5 12Q5 25 13 30Q17 33 21 30Q29 25 27.5 12L22 6H12Z" fill="#f4cb9a" /><path d="M5.5 17Q2 1 17 0Q32 1 28.5 17L26.5 16L25 9.5Q17 6.5 9 9.5L7.5 16Z" fill="#000" />
          <path d="M10 14H15M19 14H24" stroke="#222" strokeWidth="1.8" /><path d="M11.5 16.5H14M20 16.5H22.5" stroke="#333" strokeWidth="1.2" /><path d="M17 16V21L15.5 22M13.5 25.5H20.5" stroke="#9b6034" strokeWidth="1.3" fill="none" />
        </svg>
      </Task>
      <Task className="w-[65.6px]">
        <svg className={ic} viewBox="0 0 34 34">
          <rect x="3" y="2" width="28" height="23" fill="#f3f5f6" stroke="#3c70b5" /><rect x="3" y="2" width="28" height="4.5" fill="#2f72c8" /><path d="M6 10H25M6 13H20M6 16H16M6 19H15" stroke="#8a9098" />
          <circle cx="20" cy="17" r="8" fill="#bfe0f2" fillOpacity="0.9" stroke="#89a6bb" strokeWidth="1.8" /><path d="M14 23L5 31" stroke="#d8792f" strokeWidth="4.5" />
        </svg>
      </Task>
      <Task className="w-[65.6px] pl-[2px]" tone="green">
        <svg className={ic} viewBox="0 0 34 34">
          <path d="M5 2L16 1L19 7L18 15L17 32L9 33L7 30L10 14L3 9Z" fill="#17191a" /><circle cx="8" cy="7" r="4" fill="#454a4d" /><circle cx="7" cy="7" r="1.8" fill="#a6adb1" /><path d="M15 4L16 10" stroke="#888" strokeWidth="2" />
          <path d="M17 9L31 10V22L17 22Z" fill="#9c9b45" /><path d="M22 11L31 12V21L22 21Z" fill="#cccb85" />
        </svg>
      </Task>
      <Task className="w-[65.6px] pl-px" running>
        <svg className={ic} viewBox="0 0 34 34">
          <g fill="none" strokeWidth="2.6" strokeLinejoin="round"><ellipse cx="17.5" cy="22.5" rx="11" ry="9.5" stroke="#69b9d8" /><path d="M6.5 21A11 9.5 0 0 1 17 13Q23 13 26 17" stroke="#e8b33a" /><path d="M4 16Q1 3 13 2.5Q19 3 16 7Q11 8 10 13Q6 14 4 18Z" stroke="#ef7a2e" /><path d="M24 13Q24 7 20 6Q22 3 26 5Q32 10 31 19Q29 13 24 13Z" stroke="#6dc36b" /></g>
        </svg>
      </Task>
      <Task className="w-[65.6px] pl-[2px]" running>
        <svg className={ic} viewBox="0 0 34 34">
          <rect x="10" y="3" width="21" height="20" rx="2" fill="none" stroke="#1590d8" strokeWidth="5.5" /><rect x="3" y="11" width="20" height="20" rx="2" fill="none" stroke="#f78f1c" strokeWidth="5.5" /><path d="M10 12V23H22" fill="none" stroke="#1590d8" strokeWidth="5" />
        </svg>
      </Task>
      <Task className="w-[65.6px]" running>
        <svg className={ic} viewBox="0 0 34 34">
          <rect x="2" y="2" width="30" height="31" fill="#c7c7c3" stroke="#777" /><rect x="4" y="4" width="25" height="13" fill="#80a9ec" /><path d="M4 14L29 6V17H4Z" fill="#edf1f5" /><rect x="15" y="15" width="18" height="16" fill="#3a3218" stroke="#777" /><path d="M18 19H30M18 22H27M18 25H30" stroke="#c3a63a" />
          <circle cx="11" cy="26" r="6" fill="#d5d5d5" stroke="#666" strokeWidth="2" /><circle cx="11" cy="26" r="2" fill="#555" />
        </svg>
      </Task>
      <Task className="w-[65.6px]">
        <svg className={ic} viewBox="0 0 34 34"><path d="M4 1H16V14H4Z" fill="#3e86f0" /><path d="M18 1H30V14H18Z" fill="#fbc112" /><path d="M4 16H16V24L4 33Z" fill="#e94d36" /><path d="M18 16H30V33L18 24Z" fill="#6aad3d" /></svg>
      </Task>
      <Task className="w-[65.6px]">
        <svg className={ic} viewBox="0 0 34 34">
          <path d="M4 1L18 4L14 18L1 16Z" fill="#ef4360" /><path d="M1 18L10 16L13 30L4 32Z" fill="#c46397" /><path d="M1 18L8 14V24Z" fill="#f58235" /><path d="M22 3L33 9L32 27L21 34L13 29L18 10Z" fill="#1769e0" /><rect x="6" y="6" width="22" height="22" fill="#000" />
          <text x="7.5" y="18" fontSize="13" fontWeight="bold" fill="#fff" fontFamily="Liberation Mono">IJ</text><path d="M9 24H17" stroke="#fff" strokeWidth="2" />
        </svg>
      </Task>
      <Task className="w-[64.5px] pl-[2px]" running>
        <svg className={ic} viewBox="0 0 34 34">
          <path d="M3 7L7 12L8 6L13 10Q18 10 19 6L22 1Q32 8 32 19Q31 32 17 33Q3 32 1 19Q1 12 3 7Z" fill="#ff9a1f" /><path d="M22 1Q32 8 32 19Q30 29 22 31Q29 22 24 13Q20 8 22 1Z" fill="#ffdc35" /><path d="M1 18Q5 29 17 28Q26 27 28 20Q30 32 17 33Q2 32 1 18Z" fill="#f13a55" /><circle cx="17" cy="18" r="7" fill="#7d47d8" /><path d="M7 15L15 13L18 16L13 19Q14 23 19 23Q11 27 8 20Z" fill="#ff7b24" />
        </svg>
      </Task>
      <Task className="w-[64.5px] pl-[2px]" running>
        <svg className={ic} viewBox="0 0 34 34">
          <circle cx="17" cy="17" r="15.5" fill="#f8cf32" /><path d="M3.6 9.2A15.5 15.5 0 0 1 30.4 9.2H17L10.5 21Z" fill="#e2402f" /><path d="M3.6 9.2A15.5 15.5 0 0 0 16 32.5L23.7 20.8H10.5Z" fill="#2d9b4d" /><circle cx="17" cy="17" r="7.5" fill="#fff" /><circle cx="17" cy="17" r="6" fill="#3e7df0" />
        </svg>
      </Task>
      <Task className="w-[64.5px] pl-[2px]" running>
        <svg className={ic} viewBox="0 0 34 34"><circle cx="17" cy="17" r="14" fill="#f7f7f7" stroke="#333" strokeWidth="2" /><circle cx="12" cy="13.5" r="1.6" fill="#222" /><circle cx="22" cy="13.5" r="1.6" fill="#222" /><path d="M9 19Q17 28 25 19" fill="none" stroke="#222" strokeWidth="1.7" /></svg>
      </Task>
      <Task className="w-[64.5px] pl-[2px]" running>
        <svg className={ic} viewBox="0 0 34 34"><path d="M2 4H14L17 7H32V29H2Z" fill="#f4d377" /><path d="M2 8H32V29H2Z" fill="#fbe293" /><path d="M8 29V18H27V29H22V23H13V29Z" fill="#2da0df" /><rect x="4" y="5" width="4" height="1.5" fill="#28a0d8" /></svg>
      </Task>
      <Task className="-ml-[1px] w-[65.5px] pr-[1px]" tone="grey" running>
        <svg className={ic} viewBox="0 0 34 34"><path d="M5 3H32V33H2L3 6Z" fill="#d8e6f7" /><path d="M8 4H31V20L8 10Z" fill="#7fb1e8" /><path d="M4 8H9.5L11 20L15.5 8H19L20.5 20L24 8H28L22 27H17.5L16.5 17L12 27H7.5Z" fill="#1b4fa8" /><path d="M22 19L33 23L30 33H18Z" fill="#fff" /></svg>
      </Task>
      <Task className="w-[64.5px] pl-[3px]" running>
        <svg className={ic} viewBox="0 0 34 34"><path d="M5 4H28L32 26V30H2V26Z" fill="#555" /><path d="M2 26H32V31H2Z" fill="#a9a9a9" /><path d="M22 9.5Q12 6 12 12Q12 14.5 17 15Q22 16 21 19Q19 22.5 11.5 19.5" fill="none" stroke="#f79420" strokeWidth="3.3" /></svg>
      </Task>
      <div className="ml-[15px] mt-[15px] flex h-[21px] w-[21px] items-center justify-center bg-white text-[17px] leading-none text-black">拼</div>
      <div className="ml-[32px] flex items-center pb-px">
        <svg className="h-[10px] w-[18px]" viewBox="0 0 18 10"><path d="M1 9L9 1L17 9" fill="none" stroke="#fff" strokeWidth="1.5" /></svg>
        <svg className="ml-[13px] h-[22px] w-[22px]" viewBox="0 0 22 22"><path d="M7 1H15L21 7V15L15 21H7L1 15V7Z" fill="#d6120c" stroke="#fff" strokeWidth="1.2" /></svg>
        <svg className="ml-[12px] h-[16px] w-[23px]" viewBox="0 0 23 16"><rect x="6" y="5" width="14" height="9.5" fill="none" stroke="#fff" strokeWidth="1.3" /><rect x="9" y="7.5" width="9" height="5" fill="#fff" /><path d="M21.5 7.5V12M1 4H6M2 1V4M5 1V4M1.5 4V6.5L3.5 8H6M3.5 8V13H6" stroke="#fff" strokeWidth="1.3" fill="none" /></svg>
        <svg className="ml-[11px] h-[19px] w-[23px]" viewBox="0 0 23 19"><path d="M6 1.5H22V13.5H5M13.5 13.5V18M9 18H18M1 1H5V6H1ZM3 6V14" stroke="#fff" strokeWidth="1.3" fill="none" /></svg>
        <svg className="ml-[10px] h-[18px] w-[22px]" viewBox="0 0 22 18"><path d="M1 6H4L9 1.5V16.5L4 12H1Z" fill="none" stroke="#fff" strokeWidth="1.3" /><path d="M12 6.5Q14 9 12 11.5M15 4Q18.5 9 15 14" fill="none" stroke="#fff" strokeWidth="1.3" /><path d="M18 1.5Q23 9 18 16.5" fill="none" stroke="#617371" strokeWidth="1.3" /></svg>
      </div>
      <div className="ml-auto flex w-[105px] flex-col items-center pt-px text-[17.3px] leading-[25.5px] tracking-[0.1px]">
        <span>15:51</span>
        <span>2020/10/20</span>
      </div>
      <div className="h-full w-px bg-[#4b615f]" />
      <div className="w-[6px]" />
    </div>
  );
}

export default function App() {
  return (
    <div className="relative flex h-[856px] w-[1521px] flex-col overflow-hidden border-x border-t border-black bg-white font-['Open_Sans','Noto_Sans_CJK_SC',sans-serif]">
      <TitleBar />
      <RibbonTabs />
      <Ribbon />
      <div className="flex h-[570px] shrink-0 bg-[#bcc4ca] pt-[3px]">
        <NavPane />
        <div className="ml-[2px] flex w-[1124px] shrink-0 flex-col bg-[#c8cfd5] pt-[4px]">
          <DocumentView />
          <HorizontalBar />
        </div>
        <VerticalBar />
      </div>
      <StatusBar />
      <Taskbar />
      <FloatingToolbar />
    </div>
  );
}
